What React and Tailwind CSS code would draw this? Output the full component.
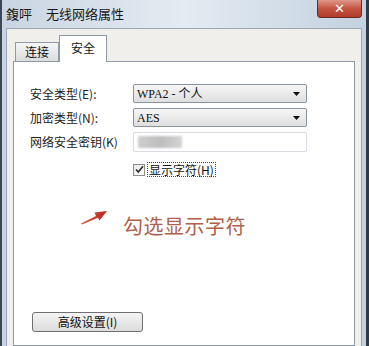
import React from "react";

const cjk = { fontFamily: '"Noto Sans CJK SC", "Noto Sans", sans-serif' };
const serif = { fontFamily: '"Liberation Serif", "Noto Sans CJK SC", serif' };

function Select({ value }) {
  return (
    <div className="flex items-center justify-between w-[174px] h-[19px] border border-[#8a949e] rounded-[2px] bg-gradient-to-b from-[#f7f7f7] to-[#dedede] pl-[3px] pr-[6px] text-[12px] text-[#111]">
      <span style={serif} className="leading-none">{value}</span>
      <svg width="7" height="4" viewBox="0 0 7 4">
        <path d="M0 0h7L3.5 4z" fill="#111" />
      </svg>
    </div>
  );
}

function Row({ label, children, className = "" }) {
  return (
    <div className={`flex items-center ${className}`}>
      <div className="w-[103px] text-[12px] text-[#222] leading-none">{label}</div>
      {children}
    </div>
  );
}

export default function App() {
  return (
    <div
      className="relative w-[369px] h-[346px] overflow-hidden flex flex-col bg-gradient-to-r from-[#c9d5e2] via-[#e4ebf2] to-[#c3d2e0] border-l-[2px] border-r-[3px] border-l-[#3c4857] border-r-[#2f3a47]"
      style={cjk}
    >
      {/* title bar */}
      <div className="h-[28px] shrink-0 flex items-center pl-[4px] text-[13px] text-[#1a1a1a]">
        <span>鍑呯</span>
        <span className="ml-[14px]">无线网络属性</span>
      </div>
      <div className="absolute top-0 right-[4px] w-[45px] h-[18px] rounded-b-[4px] border border-t-0 border-[#6b2a22] bg-gradient-to-b from-[#e0968a] via-[#c45442] to-[#b23a2a] flex items-center justify-center">
        <span className="text-white text-[13px] font-bold leading-none" style={{ fontFamily: '"DejaVu Sans", sans-serif' }}>✕</span>
      </div>

      {/* dialog body */}
      <div className="flex-1 flex flex-col ml-[4px] mr-[4px] bg-[#f1efec] border-l border-r border-t border-[#9aa6b2] px-[6px] pt-[5px]">
        {/* tabs */}
        <div className="flex items-end h-[27px] shrink-0 pl-[2px]">
          <div className="w-[44px] h-[19px] border border-b-0 border-[#8e9aa5] bg-gradient-to-b from-[#f6f6f6] to-[#dcdcdc] text-[12px] text-[#111] flex items-center justify-center">
            连接
          </div>
          <div className="w-[48px] h-[27px] -mb-px relative z-10 border border-b-0 border-[#8e9aa5] bg-white text-[12px] text-[#111] flex items-start justify-center pt-[3px]">
            安全
          </div>
        </div>
        {/* panel */}
        <div className="flex-1 flex flex-col bg-white border border-[#8e9aa5] pl-[16px] pt-[22px]">
          <Row label="安全类型(E):">
            <Select value="WPA2 - 个人" />
          </Row>
          <Row label="加密类型(N):" className="mt-[5px]">
            <Select value="AES" />
          </Row>
          <Row label="网络安全密钥(K)" className="mt-[5px]">
            <div className="w-[174px] h-[20px] border border-[#d6dce2] rounded-[2px] bg-white flex items-center pl-[4px]">
              <div className="w-[44px] h-[12px] bg-gradient-to-r from-[#cfcfcf] via-[#bdbdbd] to-[#d4d4d4] blur-[1px]" />
            </div>
          </Row>
          <div className="flex items-center mt-[10px] pl-[103px]">
            <div className="w-[12px] h-[12px] border border-[#8f8f8f] bg-gradient-to-br from-[#e8e8e8] to-[#ffffff] flex items-center justify-center">
              <svg width="9" height="9" viewBox="0 0 9 9">
                <path d="M1 4.5l2.3 2.5L8 1.2" stroke="#2b2b2b" strokeWidth="1.6" fill="none" />
              </svg>
            </div>
            <span className="ml-[2px] px-[1px] border border-dotted border-[#444] text-[12px] text-[#111] leading-[13px]">
              显示字符(H)
            </span>
          </div>

          {/* annotation */}
          <div className="flex items-center mt-[27px] pl-[50px]">
            <svg width="28" height="16" viewBox="0 0 28 16" className="-mt-[6px]">
              <defs>
                <linearGradient id="ar" x1="0" x2="1" y1="0" y2="0">
                  <stop offset="0" stopColor="#e0584a" />
                  <stop offset="1" stopColor="#b8281c" />
                </linearGradient>
              </defs>
              <path d="M1 14.5L16 7L14.5 3.5L27 2L19.5 11.5L18 8.8L2 15.5z" fill="url(#ar)" />
            </svg>
            <span className="ml-[15px] mt-[12px] text-[20px] text-[#b15f4a] leading-none tracking-[0.5px]">
              勾选显示字符
            </span>
          </div>

          <div className="mt-[76px] w-[111px] h-[20px] border border-[#707070] rounded-[3px] bg-gradient-to-b from-[#f4f4f4] to-[#dcdcdc] flex items-center justify-center text-[12px] text-[#111] ml-[2px]">
            高级设置(I)
          </div>
        </div>
      </div>
    </div>
  );
}
